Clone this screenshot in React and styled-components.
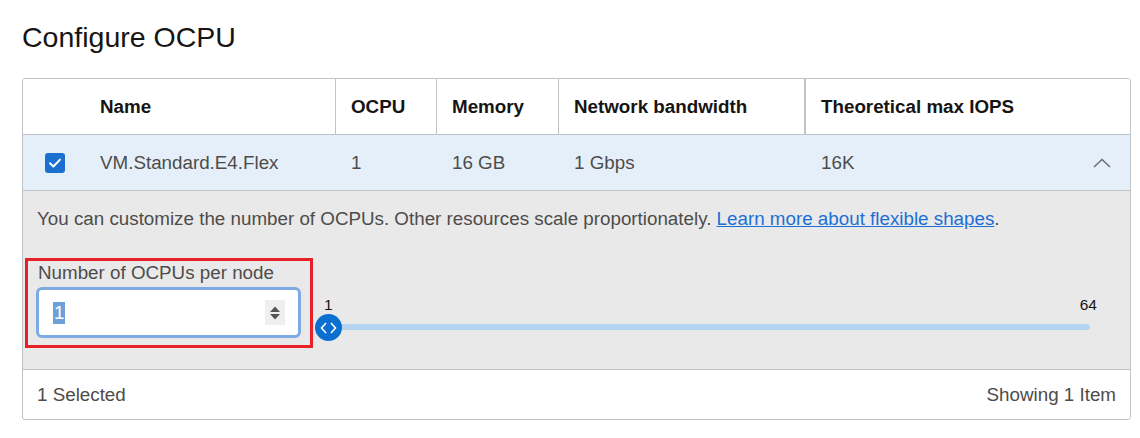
import React from "react";
import styled, { createGlobalStyle } from "styled-components";

const GlobalStyle = createGlobalStyle`
  body {
    margin: 0;
    background: #fff;
    font-family: "Liberation Sans", Arial, sans-serif;
  }
`;

const COLS = "62px 251px 101px 122px 247px 1fr";

const Page = styled.div`
  padding: 20px 9px 0 22px;
  width: 1109px;
`;

const Title = styled.h1`
  margin: 0 0 24px 0;
  font-size: 28.5px;
  line-height: 34px;
  font-weight: 400;
  color: #161513;
`;

const Card = styled.div`
  border: 1px solid #c0c3c7;
  border-radius: 3px;
  overflow: hidden;
`;

const Row = styled.div`
  display: grid;
  grid-template-columns: ${COLS};
  height: 56px;
  box-sizing: border-box;
  border-bottom: 1px solid #c0c3c7;
  background: ${(p) => (p.$selected ? "#e5eff9" : "#fff")};
`;

const HeadCell = styled.div`
  display: flex;
  align-items: center;
  padding: 0 15px;
  font-size: 18.8px;
  font-weight: 700;
  color: #161513;
  border-left: ${(p) => (p.$sep ? `${p.$sep}px solid #c0c3c7` : "none")};
  margin-left: ${(p) => (p.$sep ? `-${p.$sep}px` : "0")};
`;

const Cell = styled.div`
  display: flex;
  align-items: center;
  justify-content: ${(p) => (p.$center ? "center" : "space-between")};
  padding: 0 ${(p) => (p.$center ? "0" : "15px")};
  font-size: 18.8px;
  color: #4e4c4a;
`;

const CheckBox = styled.span`
  width: 20px;
  height: 20px;
  border-radius: 3px;
  background: #1a6fcf;
  display: flex;
  align-items: center;
  justify-content: center;
  margin-left: 2px;
`;

const Panel = styled.div`
  background: #e9e9e9;
  height: 179px;
  box-sizing: border-box;
  border-bottom: 1px solid #c0c3c7;
  padding: 17px 27px 0 14px;
`;

const Text = styled.p`
  margin: 0;
  font-size: 18.8px;
  line-height: 22px;
  color: #4e4c4a;
`;

const Link = styled.a`
  color: #1c6fd6;
  text-decoration: underline;
`;

const ControlRow = styled.div`
  display: flex;
  align-items: flex-start;
  margin-top: 32px;
`;

const FieldGroup = styled.div`
  position: relative;
  width: 265px;
  margin-left: -1px;

  &::after {
    content: "";
    position: absolute;
    left: -11px;
    top: -4px;
    width: 288px;
    height: 90px;
    box-sizing: border-box;
    border: 3px solid #e8202a;
    pointer-events: none;
  }
`;

const Label = styled.div`
  font-size: 18.8px;
  line-height: 22px;
  color: #4e4c4a;
  margin-left: 2px;
`;

const InputBox = styled.div`
  margin-top: 3px;
  height: 51px;
  box-sizing: border-box;
  border: 3px solid #7eaae3;
  border-radius: 6px;
  background: #fff;
  display: flex;
  align-items: center;
  padding: 0 13px 0 14px;
`;

const Value = styled.span`
  font-size: 18.8px;
  line-height: 22px;
  background: #6f9fd9;
  color: #fff;
  padding: 0 1px;
`;

const Spinner = styled.span`
  margin-left: auto;
  width: 20px;
  height: 25px;
  background: #efefef;
  display: flex;
  align-items: center;
  justify-content: center;
`;

const Slider = styled.div`
  flex: 1;
  margin-left: 14px;
  margin-top: 34px;
`;

const SliderLabels = styled.div`
  display: flex;
  justify-content: space-between;
  padding: 0 6px 0 9px;
  font-size: 15.5px;
  line-height: 18px;
  color: #161513;
`;

const Track = styled.div`
  height: 27px;
  display: flex;
  align-items: center;
  position: relative;

  &::before {
    content: "";
    position: absolute;
    left: 13px;
    right: 13px;
    top: 10px;
    height: 6px;
    border-radius: 3px;
    background: #b4d4f1;
  }
`;

const Thumb = styled.span`
  position: relative;
  z-index: 1;
  width: 27px;
  height: 27px;
  border-radius: 50%;
  background: #0b6fd0;
  display: flex;
  align-items: center;
  justify-content: center;
`;

const Footer = styled.div`
  height: 49px;
  display: flex;
  align-items: center;
  justify-content: space-between;
  padding: 0 14px;
  font-size: 18.8px;
  color: #4e4c4a;
`;

export default function App() {
  return (
    <>
      <GlobalStyle />
      <Page>
        <Title>Configure OCPU</Title>
        <Card>
          <Row>
            <HeadCell />
            <HeadCell>Name</HeadCell>
            <HeadCell $sep={1}>OCPU</HeadCell>
            <HeadCell $sep={1}>Memory</HeadCell>
            <HeadCell $sep={1}>Network bandwidth</HeadCell>
            <HeadCell $sep={2}>Theoretical max IOPS</HeadCell>
          </Row>
          <Row $selected>
            <Cell $center>
              <CheckBox>
                <svg width="14" height="14" viewBox="0 0 14 14">
                  <path d="M2 7.3 L5.4 10.5 L12 3.6" fill="none" stroke="#fff" strokeWidth="2" strokeLinecap="round" strokeLinejoin="round" />
                </svg>
              </CheckBox>
            </Cell>
            <Cell>VM.Standard.E4.Flex</Cell>
            <Cell>1</Cell>
            <Cell>16 GB</Cell>
            <Cell>1 Gbps</Cell>
            <Cell>
              16K
              <svg width="18" height="10" viewBox="0 0 18 10" style={{ marginRight: 4 }}>
                <path d="M1 9 L9 1.5 L17 9" fill="none" stroke="#6b6b6b" strokeWidth="1.4" />
              </svg>
            </Cell>
          </Row>
          <Panel>
            <Text>
              You can customize the number of OCPUs. Other resources scale proportionately.{" "}
              <Link href="#">Learn more about flexible shapes</Link>.
            </Text>
            <ControlRow>
              <FieldGroup>
                <Label>Number of OCPUs per node</Label>
                <InputBox>
                  <Value>1</Value>
                  <Spinner>
                    <svg width="12" height="18" viewBox="0 0 12 18">
                      <path d="M1 8 L6 2.5 L11 8 Z" fill="#555" />
                      <path d="M1 10 L6 15.5 L11 10 Z" fill="#555" />
                    </svg>
                  </Spinner>
                </InputBox>
              </FieldGroup>
              <Slider>
                <SliderLabels>
                  <span>1</span>
                  <span>64</span>
                </SliderLabels>
                <Track>
                  <Thumb>
                    <svg width="17" height="12" viewBox="0 0 17 12">
                      <path d="M6 1 L1.5 6 L6 11 M11 1 L15.5 6 L11 11" fill="none" stroke="#fff" strokeWidth="1.6" />
                    </svg>
                  </Thumb>
                </Track>
              </Slider>
            </ControlRow>
          </Panel>
          <Footer>
            <span>1 Selected</span>
            <span>Showing 1 Item</span>
          </Footer>
        </Card>
      </Page>
    </>
  );
}
